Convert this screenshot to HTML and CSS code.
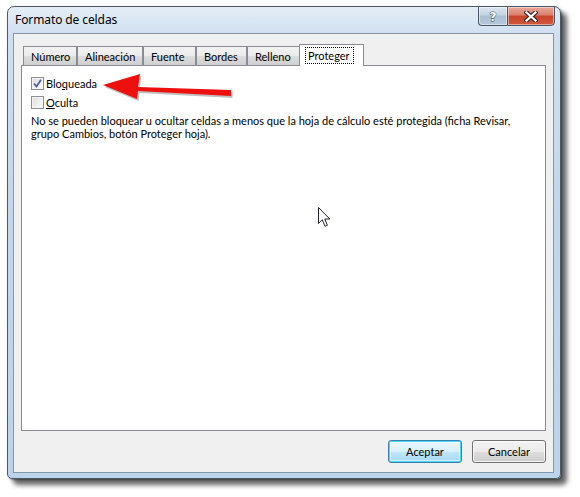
FILE: index.html
```html
<!DOCTYPE html>
<html lang="es">
<head>
<meta charset="utf-8">
<title>Formato de celdas</title>
<link rel="stylesheet" href="styles.css">
</head>
<body>
<div class="stage">
  <div class="window">
    <div class="titlebar">
      <span class="title">Formato de celdas</span>
      <div class="caption-buttons">
        <div class="cap-btn cap-help">
          <svg width="12" height="13" viewBox="0 0 12 13"><text x="6" y="11" text-anchor="middle" class="cap-glyph">?</text></svg>
        </div>
        <div class="cap-btn cap-close">
          <svg width="14" height="11" viewBox="0 0 14 11"><path d="M2.5 1.5 L11.5 9.5 M11.5 1.5 L2.5 9.5" class="x-out"/><path d="M2.5 1.5 L11.5 9.5 M11.5 1.5 L2.5 9.5" class="x-in"/></svg>
        </div>
      </div>
    </div>
    <div class="client">
      <div class="tabs">
        <div class="tab">Número</div>
        <div class="tab">Alineación</div>
        <div class="tab">Fuente</div>
        <div class="tab">Bordes</div>
        <div class="tab">Relleno</div>
        <div class="tab tab-active"><span class="focus">Proteger</span></div>
      </div>
      <div class="panel">
        <div class="check-row">
          <span class="checkbox">
            <svg width="9" height="9" viewBox="0 0 9 9"><path d="M1 4.5 L3.5 7.5 L8 0.8" class="tick"/></svg>
          </span>
          <span>Blo<u>q</u>ueada</span>
        </div>
        <div class="check-row">
          <span class="checkbox"></span>
          <span><u>O</u>culta</span>
        </div>
        <p class="note">No se pueden bloquear u ocultar celdas a menos que la hoja de cálculo esté protegida (ficha Revisar, grupo Cambios, botón Proteger hoja).</p>
      </div>
      <div class="footer">
        <button class="btn btn-default">Aceptar</button>
        <button class="btn">Cancelar</button>
      </div>
    </div>
  </div>
  <svg class="arrow" width="140" height="40" viewBox="100 70 140 40">
    <polygon points="103,85 140,74 138,87 231,90 231,96 138,91 137,99" class="arrow-shadow"/>
    <polygon points="103,85 140,74 138,87 231,90 231,96 138,91 137,99" class="arrow-fill"/>
  </svg>
  <svg class="cursor" width="13" height="21" viewBox="0 0 13 21">
    <path d="M0.5 0.5 L0.5 16.5 L4.3 12.8 L7 19.3 L9.4 18.3 L6.8 12 L11.8 12 Z" class="cursor-path"/>
  </svg>
</div>
</body>
</html>
```
FILE: styles.css
```css
* { box-sizing: border-box; }
html, body { margin: 0; padding: 0; }
body {
  background: #ffffff;
  font-family: "Segoe UI", Lato, "Noto Sans", sans-serif;
  font-size: 11px;
  color: #000;
}
.stage {
  position: relative;
  width: 580px;
  height: 497px;
  padding: 6px 0 0 7px;
}
.window {
  width: 554px;
  height: 473px;
  border: 1px solid #4f5964;
  border-radius: 7px 7px 5px 5px;
  background: linear-gradient(180deg, #e4edf6 0%, #cfdff0 6%, #c2d7ee 40%, #bcd3ec 100%);
  box-shadow: 6px 6px 5px rgba(0,0,0,0.6), 1px 1px 2px rgba(0,0,0,0.4);
  display: flex;
  flex-direction: column;
}
.titlebar {
  height: 26px;
  display: flex;
  justify-content: space-between;
  align-items: flex-start;
  padding-left: 7px;
}
.title {
  margin-top: 4px;
  font-family: "Segoe UI", "Noto Sans", sans-serif;
  font-size: 12px;
  letter-spacing: -0.1px;
  color: #000;
}
.caption-buttons {
  display: flex;
  margin-right: 5px;
  margin-top: -1px;
}
.cap-btn {
  height: 20px;
  border: 1px solid #4a5968;
  display: flex;
  align-items: center;
  justify-content: center;
  box-shadow: inset 0 0 0 1px rgba(255,255,255,0.45);
}
.cap-help {
  width: 29px;
  border-right: none;
  border-radius: 0 0 0 4px;
  background: linear-gradient(180deg, #dde6ef 0%, #c5d3e1 45%, #adbfd2 50%, #b7c8da 100%);
}
.cap-close {
  width: 48px;
  border-radius: 0 0 4px 0;
  background: linear-gradient(180deg, #e9a99c 0%, #db7f6c 45%, #c8432a 50%, #d0583d 100%);
}
.cap-glyph {
  font-family: "DejaVu Sans", sans-serif;
  font-weight: bold;
  font-size: 12px;
  fill: #ffffff;
  stroke: #3a4552;
  stroke-width: 1px;
  paint-order: stroke;
}
.x-out {
  fill: none;
  stroke: #3a2a28;
  stroke-width: 4.5px;
  stroke-linecap: square;
}
.x-in {
  fill: none;
  stroke: #ffffff;
  stroke-width: 2.2px;
  stroke-linecap: square;
}
.client {
  flex: 1;
  margin: 0 6px 5px 5px;
  border: 1px solid #8596ab;
  background: #f0f0f0;
  padding: 10px 7px 0 7px;
  display: flex;
  flex-direction: column;
}
.tabs {
  display: grid;
  grid-template-columns: 54px 66px 53px 51px 54px 61px;
  align-items: end;
  height: 21px;
  padding-left: 2px;
  position: relative;
  z-index: 1;
}
.tab {
  height: 19px;
  border: 1px solid #898c95;
  border-bottom: none;
  background: linear-gradient(180deg, #f3f3f3 0%, #ebebeb 50%, #dddddd 51%, #cfcfcf 100%);
  padding: 1px 0 0 7px;
  line-height: 17px;
  white-space: nowrap;
}
.tab-active {
  height: 22px;
  margin: 0 -2px -1px -2px;
  background: #ffffff;
  padding: 2px 0 0 5px;
}
.focus {
  display: inline-block;
  border: 1px dotted #000;
  padding: 0 3px 0 2px;
  line-height: 15px;
}
.panel {
  height: 366px;
  border: 1px solid #898c95;
  background: #ffffff;
  padding: 8px 9px 0 9px;
}
.check-row {
  height: 19px;
  display: flex;
  align-items: center;
  gap: 2px;
}
.checkbox {
  width: 13px;
  height: 13px;
  border: 1px solid #8e8f8f;
  background: linear-gradient(135deg, #dcdcdc 0%, #f0f0f0 60%, #fbfbfb 100%);
  box-shadow: inset 0 0 0 1px #f4f4f4;
  display: flex;
  align-items: center;
  justify-content: center;
}
.tick {
  fill: none;
  stroke: #4c61a1;
  stroke-width: 1.8px;
}
.note {
  margin: 2px 0 0 0;
  line-height: 13px;
  width: 500px;
}
.footer {
  display: flex;
  justify-content: flex-end;
  gap: 10px;
  padding-top: 9px;
}
.btn {
  width: 74px;
  height: 23px;
  font-family: inherit;
  font-size: 11px;
  border: 1px solid #707070;
  border-radius: 3px;
  background: linear-gradient(180deg, #f2f2f2 0%, #ebebeb 50%, #dddddd 51%, #cfcfcf 100%);
  box-shadow: inset 0 0 0 1px rgba(255,255,255,0.8);
  padding: 0;
  color: #000;
}
.btn-default {
  border-color: #3c7fb1;
  box-shadow: inset 0 0 0 1px #48d8fb, inset 0 0 0 2px rgba(255,255,255,0.5);
  background: linear-gradient(180deg, #eaf6fd 0%, #d9f0fc 50%, #bee6fd 51%, #a7d9f5 100%);
}
.arrow {
  position: absolute;
  left: 100px;
  top: 70px;
  overflow: visible;
}
.arrow-fill { fill: #ee0f0f; }
.arrow-shadow { fill: rgba(0,0,0,0.25); transform: translate(1.5px, 2px); }
.cursor {
  position: absolute;
  left: 318px;
  top: 207px;
}
.cursor-path {
  fill: #ffffff;
  stroke: #202030;
  stroke-width: 1px;
}
```
